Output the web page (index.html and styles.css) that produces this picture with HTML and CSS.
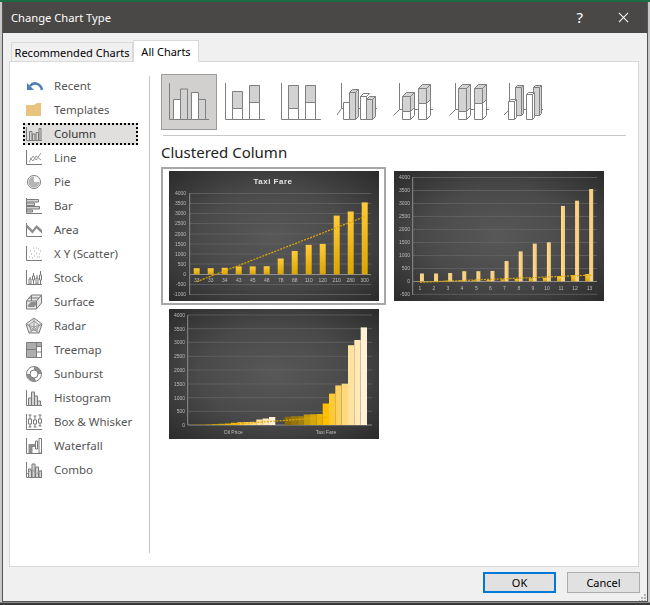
FILE: index.html
```html
<!DOCTYPE html>
<html lang="en">
<head>
<meta charset="utf-8">
<title>Change Chart Type</title>
<link rel="stylesheet" href="styles.css">
</head>
<body>
<div class="desk">
<div class="dialog">
  <header class="titlebar">
    <span class="title">Change Chart Type</span>
    <span class="help">?</span>
    <svg class="close" viewBox="0 0 12 12" width="11" height="11"><path d="M1 1l10 10M11 1L1 11"/></svg>
  </header>
  <nav class="tabs">
    <span class="tab">Recommended Charts</span>
    <span class="tab active">All Charts</span>
  </nav>
  <section class="panel">
    <aside class="sidebar">
      <ul class="types">
        <li class="type"><svg class="ti" viewBox="0 0 18 18"><path class="recent" d="M17 13C16 7 9 4 5 9"/><path class="recentfill" d="M2 6v7h7z"/></svg><span>Recent</span></li>
        <li class="type"><svg class="ti" viewBox="0 0 18 18"><path class="folder" d="M1 4h8l3-2h4v13H1z"/></svg><span>Templates</span></li>
        <li class="type selected"><svg class="ti" viewBox="0 0 18 18"><path class="ax" d="M1.500 2v13.500H17"/><path class="bar" d="M4.500 6.500h2.500v9h-2.500zM7.500 9h2.500v6.500h-2.500zM11 7.500h2.500v8h-2.500zM14 3.500h2v12h-2z"/></svg><span>Column</span></li>
        <li class="type"><svg class="ti" viewBox="0 0 18 18"><path class="ax" d="M1.500 1v14.500H17"/><path class="ln" d="M4 13l4-6 3 4 5-7M5 9l3 3 3-5 5 4"/></svg><span>Line</span></li>
        <li class="type"><svg class="ti" viewBox="0 0 18 18"><circle class="pieb" cx="9" cy="9" r="6.500"/><path class="midfill" d="M9 9V3.500a5.500 5.500 0 1 0 5.500 5.500z"/></svg><span>Pie</span></li>
        <li class="type"><svg class="ti" viewBox="0 0 18 18"><path class="ax" d="M1.500 1v15.500H17"/><path class="bar" d="M1.500 2.500h12v2.500h-12zM1.500 6h8v2.500h-8zM1.500 9.500h13v2.500h-13zM1.500 13h6v2h-6z"/></svg><span>Bar</span></li>
        <li class="type"><svg class="ti" viewBox="0 0 18 18"><path class="ax" d="M1.500 2v13.500H17"/><path class="dark" d="M1.500 3l6 6 4-5 5.500 5v3.500l-5.500-5-4 5-6-6z"/></svg><span>Area</span></li>
        <li class="type"><svg class="ti" viewBox="0 0 18 18"><path class="ax" d="M1.500 1v14.500H17"/><path class="dots" d="M4 12h1M6 9h1M7 13h1M9 6h1M9 11h1M11 8h1M12 12h1M13 4h1M14 9h1M15 6h1M11 3h1M14 12h1M5 6h1M8 3h1"/></svg><span>X Y (Scatter)</span></li>
        <li class="type"><svg class="ti" viewBox="0 0 18 18"><path class="ax" d="M1.500 1v14.500H17"/><path class="ax" d="M5 8v7M8.500 4v11M12 6v9M15.500 2v13"/><path class="boxw" d="M4 10h2v5h-2zM7.500 7h2v4h-2zM11 9h2v6h-2zM14.500 6h2v5h-2z"/></svg><span>Stock</span></li>
        <li class="type"><svg class="ti" viewBox="0 0 18 18"><path class="light" d="M1.500 8l5-6h10v8l-5 6h-10z"/><path class="ax" d="M1.500 8h10v8M11.500 8l5-6M4 5h10M6.500 2v6"/><path class="dark" d="M3 12l3-3h5v3l-2 2h-6z"/></svg><span>Surface</span></li>
        <li class="type"><svg class="ti" viewBox="0 0 18 18"><path class="light" d="M9 1l8 6-3 9H4L1 7z"/><path class="ln" d="M9 1v9M1 7l8 3 8-3M4 16l5-6 5 6M9 4l5 4-2 5H6L4 8zM1 7l13 9M17 7L4 16"/></svg><span>Radar</span></li>
        <li class="type"><svg class="ti" viewBox="0 0 18 18"><path class="treefill" d="M1.500 1.500h10v7h-10zM1.500 8.500h10v8h-10zM11.500 1.500h5v4h-5z"/><path class="ax" d="M1.500 1.500h15v15h-15zM1.500 8.500h10M11.500 1.500v15M11.500 5.500h5M11.500 11h5"/></svg><span>Treemap</span></li>
        <li class="type"><svg class="ti" viewBox="0 0 18 18"><circle class="pieb" cx="9" cy="9" r="7.500"/><path class="dark" d="M9 1.500a7.500 7.500 0 0 1 7.500 7.500H13a4 4 0 0 0-4-4zM5 9a4 4 0 0 0 5 4l1 3a7.500 7.500 0 0 1-9.500-7z"/><circle class="ringo" cx="9" cy="9" r="4"/></svg><span>Sunburst</span></li>
        <li class="type"><svg class="ti" viewBox="0 0 18 18"><path class="ax" d="M1.500 1v15.500H17"/><path class="bar" d="M3.500 9h3v7.500h-3zM6.500 3h3v13.500h-3zM9.500 7h3v9.500h-3zM12.500 12h3v4.500h-3z"/></svg><span>Histogram</span></li>
        <li class="type"><svg class="ti" viewBox="0 0 18 18"><path class="ax" d="M1.500 1v15.500H17"/><path class="ln2" d="M5 2v12M3.500 2h3M3.500 14h3M10 3v11M8.500 3h3M8.500 14h3M15 2v11M13.500 2h3M13.500 13h3"/><path class="boxw" d="M3.500 6h3v5h-3zM8.500 7h3v4h-3zM13.500 6h3v4h-3z"/></svg><span>Box &amp; Whisker</span></li>
        <li class="type"><svg class="ti" viewBox="0 0 18 18"><path class="ax" d="M1.500 1v15.500H17"/><path class="dark" d="M3.500 7h4v9h-4zM7.500 7h3v3h-3z"/><path class="boxw" d="M10.500 4h2v8h-2zM14 1.500h2.500v14.500H14z"/></svg><span>Waterfall</span></li>
        <li class="type"><svg class="ti" viewBox="0 0 18 18"><path class="ax" d="M1.500 1v15.500H17"/><path class="bar" d="M3.500 8h3v8.500h-3zM7 3h3v13.500h-3zM10.500 6h3v10.500h-3zM14 10h2.500v6.500H14z"/><path class="ln" d="M2 13l5-5 4 5 6-4"/></svg><span>Combo</span></li>
      </ul>
    </aside>
    <main class="main">
      <div class="subtypes">
        <div class="subtype current"><svg class="si" viewBox="0 0 56 56"><path class="sax" d="M8.500 9v36.500H48"/><path class="w" d="M12.500 25.500h7v20h-7zM30.500 18.500h7v27h-7z"/><path class="g" d="M19.500 15h7v30.500h-7zM37.500 25.500h7v20h-7z"/></svg></div>
        <div class="subtype"><svg class="si" viewBox="0 0 56 56"><path class="sax" d="M8.500 9v36.500H48"/><path class="g" d="M15.500 17.500h10v17h-10zM32.500 11.500h10v17h-10z"/><path class="w" d="M15.500 34.500h10v11h-10zM32.500 28.500h10v17h-10z"/></svg></div>
        <div class="subtype"><svg class="si" viewBox="0 0 56 56"><path class="sax" d="M8.500 9v36.500H48"/><path class="g" d="M15.500 11.500h10v23h-10zM32.500 11.500h10v17h-10z"/><path class="w" d="M15.500 34.500h10v11h-10zM32.500 28.500h10v17h-10z"/></svg></div>
        <div class="subtype"><svg class="si" viewBox="0 0 56 56"><path class="sax" d="M12.500 9v25.500H48M8 41l4.500-6.500"/><path class="w" d="M14.500 28.500h6v17h-6z"/><path class="g" d="M20.500 18.500h6v27h-6zM20.500 18.500l3-3h6v27l-3 3M26.500 18.500l3-3"/><path class="w" d="M31.500 22.500h6v23h-6zM31.500 22.500l3-3h6l-3 3M37.500 22.500v23"/><path class="g" d="M37.500 25.500h6v20h-6zM37.500 25.500l3-3h6v20l-3 3M43.500 25.500l3-3"/></svg></div>
        <div class="subtype"><svg class="si" viewBox="0 0 56 56"><path class="sax" d="M14.500 9v26.500H48M8.500 41.500l6-6"/><path class="g" d="M17.500 22.500h8v15h-8zM17.500 22.500l4-4h8v15l-4 4M25.500 22.500l4-4"/><path class="w" d="M17.500 37.500h8v8h-8zM25.500 37.500l4-4v8l-4 4"/><path class="g" d="M33.500 14.500h8v15h-8zM33.500 14.500l4-4h8v15l-4 4M41.500 14.500l4-4"/><path class="w" d="M33.500 29.500h8v16h-8zM41.500 29.500l4-4v16l-4 4"/></svg></div>
        <div class="subtype"><svg class="si" viewBox="0 0 56 56"><path class="sax" d="M14.500 9v26.500H48M8.500 41.500l6-6"/><path class="g" d="M17.500 14.500h8v23h-8zM17.500 14.500l4-4h8v23l-4 4M25.500 14.500l4-4"/><path class="w" d="M17.500 37.500h8v8h-8zM25.500 37.500l4-4v8l-4 4"/><path class="g" d="M33.500 14.500h8v15h-8zM33.500 14.500l4-4h8v15l-4 4M41.500 14.500l4-4"/><path class="w" d="M33.500 29.500h8v16h-8zM41.500 29.500l4-4v16l-4 4"/></svg></div>
        <div class="subtype"><svg class="si" viewBox="0 0 56 56"><path class="sax" d="M12.500 9v26.500H46M7 41l5.500-5.500"/><path class="g" d="M18.500 13.500h6v28h-6zM18.500 13.500l2-2h6v28l-2 2M24.500 13.500l2-2M36.500 13.500h6v28h-6zM36.500 13.500l2-2h6v28l-2 2M42.500 13.500l2-2"/><path class="w" d="M11.500 27.500h6v18h-6zM11.500 27.500l2-2h6v18l-2 2M17.500 27.500l2-2M29.500 20.500h6v25h-6zM29.500 20.500l2-2h6v25l-2 2M35.500 20.500l2-2"/></svg></div>
      </div>
      <hr class="rule">
      <h2 class="heading">Clustered Column</h2>
      <div class="gallery">
        <div class="preview selected-preview">
          <svg class="chart" viewBox="0 0 210 130">
            <defs>
              <linearGradient id="gold" x1="0" y1="0" x2="0" y2="1"><stop offset="0" stop-color="#ffca3a"/><stop offset="1" stop-color="#dba500"/></linearGradient>
              <linearGradient id="pale" x1="0" y1="0" x2="1" y2="0"><stop offset="0" stop-color="#ffdc8e"/><stop offset="1" stop-color="#f3c778"/></linearGradient>
            </defs>
            <text class="ctitle" x="104" y="12.500">Taxi Fare</text>
            <path class="grid" d="M21 22.500H202M21 32.500H202M21 42.500H202M21 52.500H202M21 63H202M21 73H202M21 83H202M21 93H202M21 113.500H202M21 123.500H202"/>
            <path class="axis" d="M20.700 22V124M21 103.500H202"/>
            <g class="ylab"><text x="17" y="24">4000</text><text x="17" y="34">3500</text><text x="17" y="44">3000</text><text x="17" y="54">2500</text><text x="17" y="64.500">2000</text><text x="17" y="74.500">1500</text><text x="17" y="84.500">1000</text><text x="17" y="94.500">500</text><text x="17" y="105">0</text><text x="17" y="115">-500</text><text x="17" y="125">-1000</text></g>
            <g class="xlab"><text x="27.700" y="111">33</text><text x="41.700" y="111">33</text><text x="55.700" y="111">34</text><text x="69.700" y="111">43</text><text x="83.700" y="111">45</text><text x="97.700" y="111">48</text><text x="111.700" y="111">78</text><text x="125.700" y="111">88</text><text x="139.700" y="111">110</text><text x="153.700" y="111">120</text><text x="167.700" y="111">210</text><text x="181.700" y="111">280</text><text x="195.700" y="111">300</text></g>
            <g class="gbars"><rect x="24.700" y="97.200" width="6" height="6.100"/><rect x="38.700" y="97.200" width="6" height="6.100"/><rect x="52.700" y="96.800" width="6" height="6.500"/><rect x="66.700" y="95.400" width="6" height="7.900"/><rect x="80.700" y="95.400" width="6" height="7.900"/><rect x="94.700" y="95.200" width="6" height="8.100"/><rect x="108.700" y="87.500" width="6" height="15.800"/><rect x="122.700" y="80" width="6" height="23.300"/><rect x="136.700" y="73.900" width="6" height="29.400"/><rect x="150.700" y="72.900" width="6" height="30.400"/><rect x="164.700" y="44.600" width="6" height="58.700"/><rect x="178.700" y="40.500" width="6" height="62.800"/><rect x="192.700" y="31.400" width="6" height="71.900"/></g>
            <path class="trend" d="M27.700 110.700L195.700 45.700"/>
          </svg>
        </div>
        <div class="preview">
          <svg class="chart" viewBox="0 0 210 130">
            <path class="grid" d="M19 6.500H203M19 19.500H203M19 32.500H203M19 45.500H203M19 58.500H203M19 71.500H203M19 84.500H203M19 97.500H203M19 123.300H203"/>
            <path class="axis" d="M18.700 6V124M19 110.500H203"/>
            <g class="ylab"><text x="16" y="8">4000</text><text x="16" y="21">3500</text><text x="16" y="34">3000</text><text x="16" y="47">2500</text><text x="16" y="60">2000</text><text x="16" y="73">1500</text><text x="16" y="86">1000</text><text x="16" y="99">500</text><text x="16" y="112">0</text><text x="16" y="125">-500</text></g>
            <g class="xlab"><text x="26" y="119">1</text><text x="40" y="119">2</text><text x="54" y="119">3</text><text x="68" y="119">4</text><text x="82.500" y="119">5</text><text x="96.500" y="119">6</text><text x="110.500" y="119">7</text><text x="125" y="119">8</text><text x="139" y="119">9</text><text x="153" y="119">10</text><text x="167" y="119">11</text><text x="181" y="119">12</text><text x="195.500" y="119">13</text></g>
            <g class="pbars"><rect x="26" y="102.500" width="4" height="7.800"/><rect x="40.100" y="102.500" width="4" height="7.800"/><rect x="54.200" y="102" width="4" height="8.300"/><rect x="68.300" y="100.200" width="4" height="10.100"/><rect x="82.400" y="100.200" width="4" height="10.100"/><rect x="96.500" y="99.900" width="4" height="10.400"/><rect x="110.600" y="90" width="4" height="20.300"/><rect x="124.700" y="80.400" width="4" height="29.900"/><rect x="138.800" y="72.600" width="4" height="37.700"/><rect x="152.900" y="71.300" width="4" height="39"/><rect x="167" y="34.900" width="4" height="75.400"/><rect x="181.100" y="29.700" width="4" height="80.600"/><rect x="195.200" y="18" width="4" height="92.300"/></g>
            <g class="gbars"><rect x="22" y="110" width="4" height=".3"/><rect x="36.100" y="110" width="4" height=".3"/><rect x="50.200" y="109.800" width="4" height=".5"/><rect x="64.300" y="109.500" width="4" height=".8"/><rect x="78.400" y="109.300" width="4" height="1"/><rect x="92.500" y="109" width="4" height="1.300"/><rect x="106.600" y="108.500" width="4" height="1.800"/><rect x="120.700" y="108" width="4" height="2.300"/><rect x="134.800" y="107.400" width="4" height="2.900"/><rect x="148.900" y="106.900" width="4" height="3.400"/><rect x="163" y="105.100" width="4" height="5.200"/><rect x="177.100" y="104.100" width="4" height="6.200"/><rect x="191.200" y="103" width="4" height="7.300"/></g>
            <path class="trend" d="M26 111.300L199.300 104"/>
          </svg>
        </div>
        <div class="preview">
          <svg class="chart" viewBox="0 0 210 130">
            <path class="grid" d="M19 6H203M19 19.700H203M19 33.300H203M19 47.300H203M19 61H203M19 75H203M19 88.700H203M19 102.300H203"/>
            <path class="axis" d="M18.700 6V116M19 116H203"/>
            <g class="ylab"><text x="16" y="8">4000</text><text x="16" y="21.500">3500</text><text x="16" y="35">3000</text><text x="16" y="49">2500</text><text x="16" y="63">2000</text><text x="16" y="77">1500</text><text x="16" y="90.500">1000</text><text x="16" y="104">500</text><text x="16" y="118">0</text></g>
            <g class="xlab"><text x="64.300" y="125">Oil Price</text><text x="157" y="125">Taxi Fare</text></g>
            <g><rect x="24" y="115.500" width="6.300" height=".5" fill="#8a6a0a"/><rect x="30.300" y="115.500" width="6.300" height=".5" fill="#98750b"/><rect x="36.700" y="115.200" width="6.300" height=".8" fill="#a6800c"/><rect x="43" y="115" width="6.300" height="1" fill="#c39a0c"/><rect x="49.300" y="114.800" width="6.300" height="1.200" fill="#d4a80a"/><rect x="55.700" y="114.500" width="6.300" height="1.500" fill="#e8b406"/><rect x="62" y="113.800" width="6.300" height="2.200" fill="#ffc000"/><rect x="68.300" y="113.200" width="6.300" height="2.800" fill="#ffc933"/><rect x="74.600" y="113" width="6.300" height="3" fill="#ffd15c"/><rect x="81" y="112.800" width="6.300" height="3.200" fill="#ffd97d"/><rect x="87.300" y="110.500" width="6.300" height="5.500" fill="#ffe29c"/><rect x="93.600" y="109.500" width="6.300" height="6.500" fill="#ffe9b8"/><rect x="100" y="108" width="6.300" height="8" fill="#fff0d6"/>
            <rect x="115.700" y="107.700" width="6.300" height="8.300" fill="#8a6a0a"/><rect x="122" y="107.200" width="6.300" height="8.800" fill="#98750b"/><rect x="128.400" y="107.200" width="6.300" height="8.800" fill="#a6800c"/><rect x="134.700" y="105.500" width="6.300" height="10.500" fill="#c39a0c"/><rect x="141" y="105.300" width="6.300" height="10.700" fill="#d4a80a"/><rect x="147.400" y="105" width="6.300" height="11" fill="#e8b406"/><rect x="153.700" y="94.500" width="6.300" height="21.500" fill="#ffc000"/><rect x="160" y="84.600" width="6.300" height="31.400" fill="#ffc933"/><rect x="166.300" y="76.400" width="6.300" height="39.600" fill="#ffd15c"/><rect x="172.700" y="74.700" width="6.300" height="41.300" fill="#ffd97d"/><rect x="179" y="36.200" width="6.300" height="79.800" fill="#ffe29c"/><rect x="185.300" y="31" width="6.300" height="85" fill="#ffe9b8"/><rect x="191.700" y="18.400" width="6.300" height="97.600" fill="#fff0d6"/></g>
            <path class="trend" d="M62.700 115.300L157.700 108.300"/>
          </svg>
        </div>
      </div>
    </main>
  </section>
  <footer class="footer">
    <button class="btn primary" type="button">OK</button>
    <button class="btn" type="button">Cancel</button>
    <svg class="grip" viewBox="0 0 8 8" width="8" height="8"><path d="M5 1h2v2H5zM2 4h2v2H2zM5 4h2v2H5zM0 7h1v1H0zM2 7h2v1H2zM5 7h2v1H5z"/></svg>
  </footer>
</div>
</div>
</body>
</html>
```
FILE: styles.css
```css
* { box-sizing: border-box; }
html, body { margin: 0; padding: 0; }
body {
  width: 650px;
  height: 605px;
  overflow: hidden;
  font-family: "Noto Sans", "Open Sans", sans-serif;
  font-size: 12px;
}
.desk {
  width: 650px;
  height: 605px;
  padding: 2px 2px 0;
  background:
    linear-gradient(#1f6b42 0 2px, transparent 2px),
    linear-gradient(to top, #3a3a3a 0 2px, #8a8a8a 2px 3px, transparent 3px),
    #c9c9c9;
}
.dialog {
  position: relative;
  width: 646px;
  height: 600px;
  background: #f0f0f0;
  border: 1px solid #555;
  border-top: 0;
}
.titlebar {
  display: flex;
  align-items: center;
  height: 31px;
  padding: 0 18px 0 8px;
  background: #4a4846;
  color: #fff;
  font-size: 11.2px;
}
.title { flex: 1; padding-bottom: 1px; }
.help { font-size: 15px; margin-right: 35px; padding-bottom: 2px; }
.close { display: block; }
.close path { stroke: #fff; stroke-width: 1.100; fill: none; }

.tabs {
  display: flex;
  align-items: flex-end;
  height: 28px;
  padding-left: 8px;
  position: relative;
  z-index: 1;
  font-size: 11px;
}
.tab {
  display: flex;
  align-items: center;
  justify-content: center;
  height: 19px;
  width: 122px;
  white-space: nowrap;
  border: 1px solid #d9d9d9;
  border-bottom: 0;
  background: #f0f0f0;
  color: #000;
}
.tab.active {
  width: 66px;
  height: 22px;
  margin-bottom: -1px;
  background: #fff;
  border-bottom: 0;
}
.panel {
  display: flex;
  width: 630px;
  height: 506px;
  margin-left: 6px;
  padding-top: 12px;
  background: #fff;
  border: 1px solid #d9d9d9;
}
.sidebar {
  width: 140px;
  height: 477px;
  margin-top: 2px;
  border-right: 1px solid #c6c6c6;
}
.types {
  list-style: none;
  margin: -1px 0 0;
  padding: 0 0 0 13px;
  display: flex;
  flex-direction: column;
  gap: 2px;
  font-size: 11.500px;
}
.type {
  display: flex;
  align-items: center;
  gap: 11px;
  width: 115px;
  height: 22px;
  border: 2px solid transparent;
  color: #555;
}
.type span { padding-bottom: 2px; white-space: nowrap; }
.type.selected {
  background: #e0dfdd;
  border: 2px dotted #000;
  color: #333;
}
.ti { width: 18px; height: 18px; flex: none; display: block; }
.ax { fill: none; stroke: #7b7b7b; stroke-width: 1; }
.bar { fill: #d4d4d4; stroke: #7b7b7b; stroke-width: 1; }
.ln { fill: none; stroke: #9a9a9a; stroke-width: 1; }
.ln2 { fill: none; stroke: #7b7b7b; stroke-width: 1; }
.boxw { fill: #fff; stroke: #7b7b7b; stroke-width: 1; }
.dark { fill: #8e8e8e; }
.midfill { fill: #b5b5b5; }
.light { fill: #e6e6e6; stroke: #7b7b7b; stroke-width: 1; }
.dots { fill: none; stroke: #a8a8a8; stroke-width: 1; }
.pieb { fill: #fff; stroke: #7b7b7b; stroke-width: 1; }
.ringo { fill: none; stroke: #7b7b7b; stroke-width: 1; }
.treefill { fill: #adadad; }
.recent { fill: none; stroke: #4c7fb7; stroke-width: 2.600; }
.recentfill { fill: #4c7fb7; }
.folder { fill: #eac47e; }

.main { flex: 1; padding-left: 11px; min-width: 0; }
.subtypes { display: flex; }
.subtype { width: 56px; height: 56px; border: 1px solid transparent; }
.subtype.current { background: #d1d0ce; border-color: #9b9b9b; }
.si { display: block; width: 56px; height: 56px; margin: -1px; }
.sax { fill: none; stroke: #7f7f7f; stroke-width: 1; }
.w { fill: #fff; stroke: #7f7f7f; stroke-width: 1; }
.g { fill: #d2d2d2; stroke: #7f7f7f; stroke-width: 1; }
.rule { height: 1px; border: 0; margin: 5px 12px 0 2px; background: #c8c8c8; }
.heading {
  margin: 6px 0 5px 0;
  font-size: 15px;
  line-height: 20px;
  font-weight: 400;
  color: #222;
}
.gallery { display: flex; flex-wrap: wrap; }
.preview {
  width: 225px;
  height: 138px;
  padding: 2px 5px 2px 6px;
  border: 2px solid transparent;
}
.preview.selected-preview { border-color: #a6a6a6; }
.chart {
  display: block;
  width: 210px;
  height: 130px;
  background: radial-gradient(ellipse at center, #585858 0%, #4a4a4a 50%, #2b2b2b 100%);
  filter: blur(.6px);
}
.ctitle { font: 700 8px "Liberation Sans", sans-serif; fill: #e4e4e4; text-anchor: middle; letter-spacing: .5px; }
.ylab text { font: 5px "Liberation Sans", sans-serif; fill: #bdbdbd; text-anchor: end; }
.xlab text { font: 5px "Liberation Sans", sans-serif; fill: #bdbdbd; text-anchor: middle; }
.grid { stroke: #636363; stroke-width: .8; fill: none; }
.axis { stroke: #8d8d8d; stroke-width: 1; fill: none; }
.gbars { fill: url(#gold); }
.pbars { fill: url(#pale); }
.trend { stroke: #e0aa00; stroke-width: 1.200; stroke-dasharray: 2 1.200; fill: none; }

.footer {
  display: flex;
  justify-content: flex-end;
  gap: 11px;
  padding: 5px 7px 0 0;
  font-size: 11px;
}
.btn {
  width: 73px;
  height: 21px;
  padding: 0;
  font: inherit;
  color: #000;
  background: #e1e1e1;
  border: 1px solid #adadad;
}
.btn.primary { border: 2px solid #0078d7; }
.grip { position: absolute; right: 0; bottom: 0; fill: #b5b5b5; }
```
